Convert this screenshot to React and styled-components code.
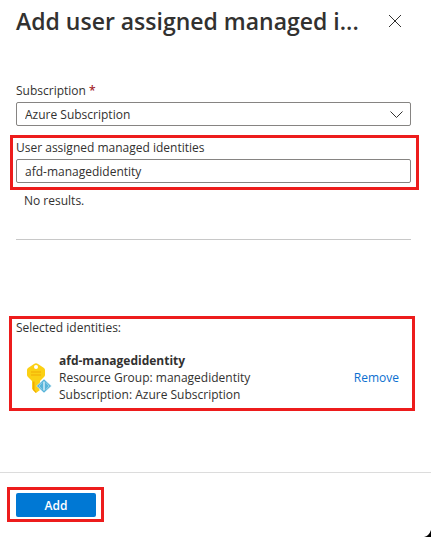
import React, { useState } from "react";
import styled, { createGlobalStyle, css } from "styled-components";

const GlobalStyle = createGlobalStyle`
  * { box-sizing: border-box; }
  body {
    margin: 0;
    background: #fff;
    color: #323130;
    font-family: "Open Sans", "Noto Sans", sans-serif;
    font-size: 12px;
    line-height: 17px;
  }
  button, input, select { font: inherit; color: inherit; }
`;

const Panel = styled.div`
  position: relative;
  display: flex;
  flex-direction: column;
  min-height: 100vh;
  overflow: hidden;
`;

const Header = styled.header`
  display: flex;
  align-items: center;
  justify-content: space-between;
  height: 42px;
  padding: 0 28px 0 16px;
`;

const Title = styled.h1`
  margin: 0;
  font-size: 23px;
  line-height: 32px;
  font-weight: 600;
  white-space: nowrap;
`;

const CloseButton = styled.button`
  display: flex;
  padding: 2px;
  border: 0;
  background: none;
  cursor: pointer;
`;

const Body = styled.main`
  flex: 1;
  padding: 41px 20px 0 16px;
`;

const Field = styled.div`
  display: flex;
  flex-direction: column;
`;

const Label = styled.label`
  line-height: 16px;
  margin-bottom: 3px;
`;

const Required = styled.span`
  color: #a4262c;
  font-weight: 600;
`;

const control = css`
  width: 100%;
  height: 24px;
  padding: 0 8px;
  border: 1px solid #868482;
  border-radius: 2px;
  background: #fff;
  outline: none;
`;

const SelectBox = styled.div`
  position: relative;
`;

const Select = styled.select`
  ${control}
  appearance: none;
`;

const Chevron = styled.svg`
  position: absolute;
  right: 8px;
  top: 9px;
  pointer-events: none;
`;

const TextInput = styled.input`
  ${control}
`;

const Highlight = styled.div`
  border: 3px solid #ed1c1c;
`;

const SearchHighlight = styled(Highlight)`
  margin: 9px -8px 0 -6px;
  padding: 2px 5px 4px 3px;
`;

const Results = styled.p`
  margin: 2px 0 0;
  padding: 0 8px;
`;

const Divider = styled.hr`
  height: 1px;
  margin: 30px 0 76px;
  border: 0;
  background: #c8c8c8;
`;

const SelectedHighlight = styled(Highlight)`
  margin: 0 -4px 0 -7px;
  padding: 0 1px 5px 4px;
`;

const SectionLabel = styled.h2`
  margin: 0 0 16px;
  font-size: 12px;
  line-height: 17px;
  font-weight: 400;
`;

const Identity = styled.div`
  display: flex;
  align-items: center;
  padding: 0 12px 0 10px;
`;

const Details = styled.div`
  flex: 1;
  margin-left: 7px;
`;

const Name = styled.div`
  font-weight: 700;
`;

const RemoveLink = styled.a`
  color: #0b6fd0;
  text-decoration: none;
`;

const Footer = styled.footer`
  display: flex;
  height: 65px;
  padding: 14px 7px;
  border-top: 1px solid #dcdcdc;
  align-items: flex-start;
`;

const AddHighlight = styled(Highlight)`
  padding: 3px 5px 2px 6px;
`;

const AddButton = styled.button`
  display: block;
  width: 80px;
  height: 24px;
  padding: 0;
  border: 0;
  border-radius: 2px;
  background: #0078d4;
  color: #fff;
  font-weight: 600;
  cursor: pointer;
`;

const Corner = styled.svg`
  position: absolute;
  right: 0;
  bottom: 0;
`;

function KeyIcon() {
  return (
    <svg width="26" height="32" viewBox="0 0 26 32" aria-hidden="true">
      <path
        d="M8 2q2-1.500 4 0l6 4q1 1 1 2v5q0 1-1 2l-4 4v3l-1 1 1 2-1 2 1 1-4 3-4-4V19l-4-4q-1-1-1-2V8q0-1 1-2z"
        fill="#fbd014"
      />
      <path d="M7 19.500h1.500V28l1.500 1.500V31l-3-3z" fill="#f2a900" />
      <circle cx="10" cy="5" r="2" fill="#fff" />
      <path d="M5 10h10M5 13h10" stroke="#f5b60a" strokeWidth="1.500" />
      <path d="M18 17l7.500 7-7.500 7-7.500-7z" fill="#58b4d9" stroke="#fff" strokeWidth="0.500" />
      <path d="M16 20.500L13 24l3 3.500M20 20.500l3 3.500-3 3.500" fill="none" stroke="#9bd3ea" strokeWidth="1" />
      <path d="M18 19.500v9" stroke="#d5eef8" strokeWidth="1.500" />
    </svg>
  );
}

export default function App() {
  const [query, setQuery] = useState("afd-managedidentity");
  return (
    <>
      <GlobalStyle />
      <Panel>
        <Header>
          <Title>Add user assigned managed i...</Title>
          <CloseButton aria-label="Close">
            <svg width="12" height="12" viewBox="0 0 12 12" stroke="#323130" fill="none">
              <path d="M0 0l12 12M12 0L0 12" />
            </svg>
          </CloseButton>
        </Header>
        <Body>
          <Field>
            <Label htmlFor="subscription">
              Subscription <Required>*</Required>
            </Label>
            <SelectBox>
              <Select id="subscription">
                <option>Azure Subscription</option>
              </Select>
              <Chevron width="13" height="8" viewBox="0 0 13 8" fill="none" stroke="#323130" aria-hidden="true">
                <path d="M0.500 0.500l6 6 6-6" />
              </Chevron>
            </SelectBox>
          </Field>
          <SearchHighlight>
            <Field>
              <Label htmlFor="identities">User assigned managed identities</Label>
              <TextInput id="identities" value={query} onChange={(e) => setQuery(e.target.value)} />
            </Field>
          </SearchHighlight>
          <Results>No results.</Results>
          <Divider />
          <SelectedHighlight>
            <SectionLabel>Selected identities:</SectionLabel>
            <Identity>
              <KeyIcon />
              <Details>
                <Name>afd-managedidentity</Name>
                <div>Resource Group: managedidentity</div>
                <div>Subscription: Azure Subscription</div>
              </Details>
              <RemoveLink href="#remove">Remove</RemoveLink>
            </Identity>
          </SelectedHighlight>
        </Body>
        <Footer>
          <AddHighlight>
            <AddButton>Add</AddButton>
          </AddHighlight>
        </Footer>
        <Corner width="7" height="7" viewBox="0 0 7 7" aria-hidden="true">
          <path d="M7 0v7H0q5-1 7-7z" fill="#000" />
        </Corner>
      </Panel>
    </>
  );
}
